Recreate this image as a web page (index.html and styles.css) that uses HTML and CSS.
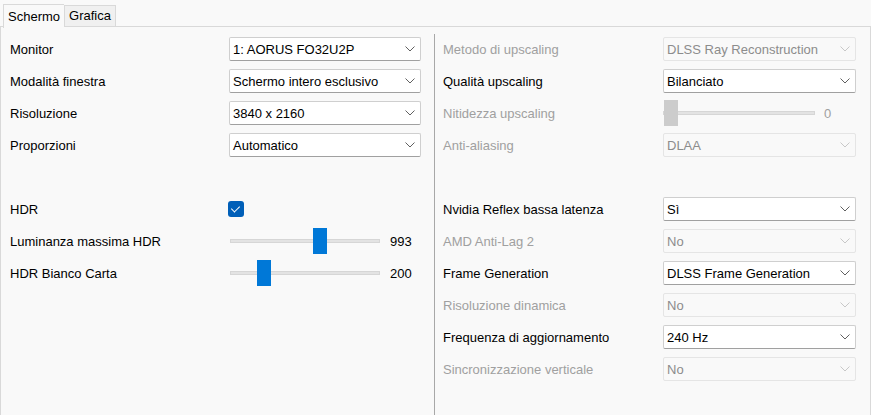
FILE: index.html
```html
<!DOCTYPE html>
<html lang="it">
<head>
    <meta charset="UTF-8">
    <title>Impostazioni</title>
    <link rel="stylesheet" href="styles.css">
</head>
<body>
    <div class="tabs">
        <div class="tab active">Schermo</div>
        <div class="tab">Grafica</div>
    </div>

    <div class="panel">
        <div class="column left">
            <div class="label">Monitor</div>
            <div class="combo"><span>1: AORUS FO32U2P</span><svg class="chev" viewBox="0 0 10 6"><polyline points="0.5,0.5 5,5 9.5,0.5"/></svg></div>

            <div class="label">Modalità finestra</div>
            <div class="combo"><span>Schermo intero esclusivo</span><svg class="chev" viewBox="0 0 10 6"><polyline points="0.5,0.5 5,5 9.5,0.5"/></svg></div>

            <div class="label">Risoluzione</div>
            <div class="combo"><span>3840 x 2160</span><svg class="chev" viewBox="0 0 10 6"><polyline points="0.5,0.5 5,5 9.5,0.5"/></svg></div>

            <div class="label">Proporzioni</div>
            <div class="combo"><span>Automatico</span><svg class="chev" viewBox="0 0 10 6"><polyline points="0.5,0.5 5,5 9.5,0.5"/></svg></div>

            <div class="spacer"></div>

            <div class="label">HDR</div>
            <div class="control"><span class="check"></span></div>

            <div class="label">Luminanza massima HDR</div>
            <div class="control slider">
                <div class="track"><span class="thumb" style="left: 82px"></span></div>
                <span class="value">993</span>
            </div>

            <div class="label">HDR Bianco Carta</div>
            <div class="control slider">
                <div class="track"><span class="thumb" style="left: 26px"></span></div>
                <span class="value">200</span>
            </div>
        </div>

        <div class="column right">
            <div class="label off">Metodo di upscaling</div>
            <div class="combo off"><span>DLSS Ray Reconstruction</span><svg class="chev" viewBox="0 0 10 6"><polyline points="0.5,0.5 5,5 9.5,0.5"/></svg></div>

            <div class="label">Qualità upscaling</div>
            <div class="combo"><span>Bilanciato</span><svg class="chev" viewBox="0 0 10 6"><polyline points="0.5,0.5 5,5 9.5,0.5"/></svg></div>

            <div class="label off">Nitidezza upscaling</div>
            <div class="control slider off">
                <div class="track"><span class="thumb" style="left: 0px"></span></div>
                <span class="value">0</span>
            </div>

            <div class="label off">Anti-aliasing</div>
            <div class="combo off"><span>DLAA</span><svg class="chev" viewBox="0 0 10 6"><polyline points="0.5,0.5 5,5 9.5,0.5"/></svg></div>

            <div class="spacer"></div>

            <div class="label">Nvidia Reflex bassa latenza</div>
            <div class="combo"><span>Sì</span><svg class="chev" viewBox="0 0 10 6"><polyline points="0.5,0.5 5,5 9.5,0.5"/></svg></div>

            <div class="label off">AMD Anti-Lag 2</div>
            <div class="combo off"><span>No</span><svg class="chev" viewBox="0 0 10 6"><polyline points="0.5,0.5 5,5 9.5,0.5"/></svg></div>

            <div class="label">Frame Generation</div>
            <div class="combo"><span>DLSS Frame Generation</span><svg class="chev" viewBox="0 0 10 6"><polyline points="0.5,0.5 5,5 9.5,0.5"/></svg></div>

            <div class="label off">Risoluzione dinamica</div>
            <div class="combo off"><span>No</span><svg class="chev" viewBox="0 0 10 6"><polyline points="0.5,0.5 5,5 9.5,0.5"/></svg></div>

            <div class="label">Frequenza di aggiornamento</div>
            <div class="combo"><span>240 Hz</span><svg class="chev" viewBox="0 0 10 6"><polyline points="0.5,0.5 5,5 9.5,0.5"/></svg></div>

            <div class="label off">Sincronizzazione verticale</div>
            <div class="combo off"><span>No</span><svg class="chev" viewBox="0 0 10 6"><polyline points="0.5,0.5 5,5 9.5,0.5"/></svg></div>
        </div>
    </div>
</body>
</html>
```

FILE: styles.css
```css
body {
    margin: 0;
    background: #f9f9f9;
    font-family: "Liberation Sans", Arial, sans-serif;
    font-size: 13px;
    color: #000;
    overflow: hidden;
}
.tabs {
    display: flex;
    align-items: flex-end;
    height: 27px;
    padding-left: 3px;
}
.tab {
    height: 20px;
    line-height: 20px;
    padding: 0 4px;
    background: #f0f0f0;
    border: 1px solid #d9d9d9;
    border-bottom: none;
    margin-bottom: 1px;
}
.tab.active {
    height: 23px;
    line-height: 24px;
    background: #f9f9f9;
    margin-bottom: -1px;
    position: relative;
    z-index: 1;
    border-right: none;
}
.panel {
    display: flex;
    height: 400px;
    width: 871px;
    border: 1px solid #d9d9d9;
    border-bottom: none;
    margin-top: -1px;
    padding-top: 7px;
    box-sizing: border-box;
}
.column {
    display: grid;
    grid-auto-rows: 24px;
    row-gap: 8px;
    align-content: start;
    align-items: center;
    padding-top: 3px;
}
.left {
    width: 433px;
    padding-left: 9px;
    box-sizing: border-box;
    grid-template-columns: 219px 192px;
}
.right {
    flex: 1;
    border-left: 1px solid #a8a8a8;
    padding-left: 8px;
    grid-template-columns: 220px 193px;
}
.spacer {
    grid-column: 1 / 3;
}
.label {
    white-space: nowrap;
}
.label.off {
    color: #a0a0a0;
}
.combo {
    height: 24px;
    box-sizing: border-box;
    border: 1px solid #cfcfcf;
    border-bottom-color: #a0a0a0;
    border-radius: 2px;
    background: #fff;
    display: flex;
    align-items: center;
    justify-content: space-between;
    padding: 0 5px 0 3px;
}
.combo.off {
    background: #f9f9f9;
    border-color: #e5e5e5;
    color: #8c8c8c;
}
.chev {
    width: 10px;
    height: 6px;
    fill: none;
    stroke: #606060;
    stroke-width: 1;
}
.combo.off .chev {
    stroke: #c8c8c8;
}
.control {
    display: flex;
    align-items: center;
    height: 24px;
}
.check {
    width: 16px;
    height: 16px;
    margin-left: -1px;
    border-radius: 3px;
    background: #005fb8;
    position: relative;
}
.check::after {
    content: "";
    position: absolute;
    left: 5px;
    top: 3px;
    width: 4px;
    height: 7px;
    border-right: 1px solid #fff;
    border-bottom: 1px solid #fff;
    transform: rotate(45deg);
}
.slider .track {
    position: relative;
    width: 150px;
    height: 4px;
    background: #e3e3e3;
    border: 1px solid #d6d6d6;
    box-sizing: border-box;
    margin-left: 1px;
}
.thumb {
    position: absolute;
    top: -12px;
    width: 14px;
    height: 26px;
    background: #0078d7;
}
.slider .value {
    margin-left: 10px;
}
.slider.off .value {
    color: #a0a0a0;
    margin-left: 9px;
}
.slider.off .track {
    width: 152px;
    margin-left: 0;
}
.slider.off .thumb {
    background: #cccccc;
}
```
